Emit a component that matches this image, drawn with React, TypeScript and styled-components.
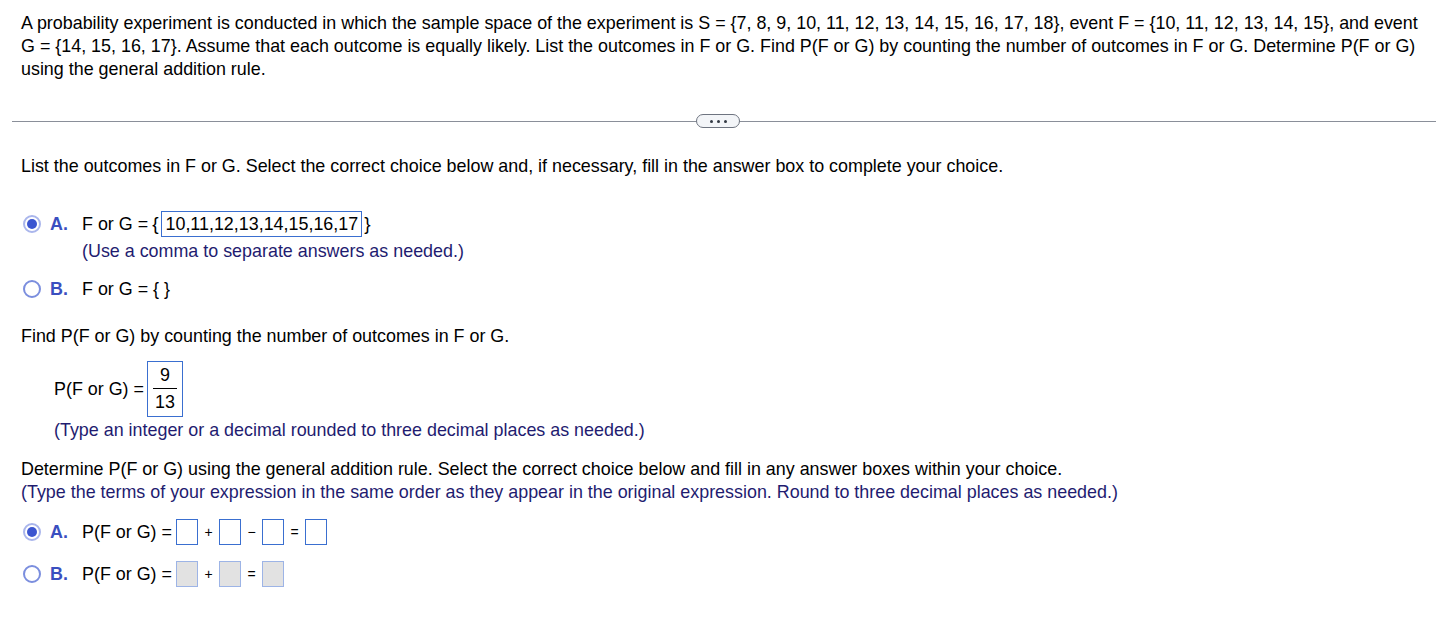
import styled, { createGlobalStyle } from "styled-components"
import type { ReactNode } from "react"

const GlobalStyle = createGlobalStyle`
    html, body {
        margin: 0;
        padding: 0;
        background: #ffffff;
    }
    body {
        font-family: "Liberation Sans", Arial, sans-serif;
        font-size: 17.9px;
        color: #000000;
    }
`

const QUESTION =
    "A probability experiment is conducted in which the sample space of the experiment is " +
    "S = {7, 8, 9, 10, 11, 12, 13, 14, 15, 16, 17, 18}, event F = {10, 11, 12, 13, 14, 15}, " +
    "and event G = {14, 15, 16, 17}. Assume that each outcome is equally likely. List the " +
    "outcomes in F or G. Find P(F or G) by counting the number of outcomes in F or G. " +
    "Determine P(F or G) using the general addition rule."

function Radio({ checked }: { checked?: boolean }) {
    return (
        <RadioSlot>
            <RadioCircle $checked={checked} />
        </RadioSlot>
    )
}

function Choice({
    letter,
    checked,
    children,
}: {
    letter: string
    checked?: boolean
    children: ReactNode
}) {
    return (
        <ChoiceRow>
            <Radio checked={checked} />
            <Letter>{letter}.</Letter>
            <ChoiceBody>{children}</ChoiceBody>
        </ChoiceRow>
    )
}

export default function App() {
    return (
        <Page>
            <GlobalStyle />
            <Question>{QUESTION}</Question>

            <Divider>
                <MoreButton>
                    <Dot />
                    <Dot />
                    <Dot />
                </MoreButton>
            </Divider>

            <Section $top={27}>
                <Prompt>
                    List the outcomes in F or G. Select the correct choice below and, if
                    necessary, fill in the answer box to complete your choice.
                </Prompt>

                <Choices $top={33}>
                    <Choice letter="A" checked>
                        <Line>
                            <span>F or G =</span>
                            <Brace>{"{"}</Brace>
                            <AnswerBox>10,11,12,13,14,15,16,17</AnswerBox>
                            <Brace>{"}"}</Brace>
                        </Line>
                        <Hint $top={3}>(Use a comma to separate answers as needed.)</Hint>
                    </Choice>
                    <Choice letter="B">
                        <Line>{"F or G = { }"}</Line>
                    </Choice>
                </Choices>
            </Section>

            <Section $top={23}>
                <Prompt>Find P(F or G) by counting the number of outcomes in F or G.</Prompt>
                <Indented>
                    <Line>
                        <span>P(F or G) =</span>
                        <FractionBox>
                            <Numerator>9</Numerator>
                            <Denominator>13</Denominator>
                        </FractionBox>
                    </Line>
                    <Hint $top={2}>
                        (Type an integer or a decimal rounded to three decimal places as needed.)
                    </Hint>
                </Indented>
            </Section>

            <Section $top={16}>
                <Prompt>
                    Determine P(F or G) using the general addition rule. Select the correct
                    choice below and fill in any answer boxes within your choice.
                </Prompt>
                <Hint>
                    (Type the terms of your expression in the same order as they appear in the
                    original expression. Round to three decimal places as needed.)
                </Hint>
                <Choices $top={15} $gap={16}>
                    <Choice letter="A" checked>
                        <Line>
                            <span>P(F or G) =</span>
                            <EmptyBox />
                            <Op>+</Op>
                            <EmptyBox />
                            <Op>−</Op>
                            <EmptyBox />
                            <Op>=</Op>
                            <EmptyBox />
                        </Line>
                    </Choice>
                    <Choice letter="B">
                        <Line>
                            <span>P(F or G) =</span>
                            <EmptyBox $disabled />
                            <Op>+</Op>
                            <EmptyBox $disabled />
                            <Op>=</Op>
                            <EmptyBox $disabled />
                        </Line>
                    </Choice>
                </Choices>
            </Section>
        </Page>
    )
}

const Page = styled.div`
    width: 1436px;
    padding-top: 12px;
`

const Question = styled.p`
    margin: 0;
    padding: 0 14px 0 21px;
    line-height: 23px;
`

const Divider = styled.div`
    margin: 33px 0 0 12px;
    height: 14px;
    display: flex;
    align-items: center;
    justify-content: center;
    position: relative;

    &::before {
        content: "";
        position: absolute;
        left: 0;
        right: 0;
        top: 7px;
        border-top: 1px solid #8a8f99;
    }
`

const MoreButton = styled.div`
    position: relative;
    width: 42px;
    height: 12px;
    margin-left: -12px;
    border: 1px solid #6e7480;
    border-radius: 7px;
    background: #f3f5f8;
    display: flex;
    align-items: center;
    justify-content: center;
    gap: 4px;
`

const Dot = styled.span`
    width: 3px;
    height: 3px;
    border-radius: 50%;
    background: #333a44;
`

const Section = styled.div<{ $top: number }>`
    padding-left: 21px;
    margin-top: ${({ $top }) => $top}px;
`

const Prompt = styled.div`
    line-height: 23px;
`

const Hint = styled.div<{ $top?: number }>`
    color: #1f1c70;
    line-height: 23px;
    margin-top: ${({ $top }) => $top ?? 0}px;
`

const Choices = styled.div<{ $top: number; $gap?: number }>`
    display: flex;
    flex-direction: column;
    gap: ${({ $gap }) => $gap ?? 13}px;
    margin-top: ${({ $top }) => $top}px;
`

const ChoiceRow = styled.div`
    display: flex;
    align-items: flex-start;
`

const RadioSlot = styled.span`
    width: 22px;
    height: 26px;
    display: flex;
    align-items: center;
    justify-content: center;
    flex-shrink: 0;
`

const RadioCircle = styled.span<{ $checked?: boolean }>`
    width: 18px;
    height: 18px;
    box-sizing: border-box;
    border-radius: 50%;
    border: 2px solid ${({ $checked }) => ($checked ? "#aab6ec" : "#7b8ede")};
    background: #ffffff;
    display: flex;
    align-items: center;
    justify-content: center;

    &::after {
        content: "";
        width: 10px;
        height: 10px;
        border-radius: 50%;
        background: ${({ $checked }) => ($checked ? "#3b55d0" : "transparent")};
    }
`

const Letter = styled.span`
    width: 32px;
    margin-left: 7px;
    line-height: 26px;
    font-weight: 700;
    color: #3a4fc0;
`

const ChoiceBody = styled.div`
    display: flex;
    flex-direction: column;
`

const Line = styled.div`
    display: flex;
    align-items: center;
    gap: 4px;
    min-height: 26px;
    white-space: pre;
`

const Brace = styled.span`
    font-size: 19px;
`

const AnswerBox = styled.span`
    border: 1px solid #3a6fd0;
    padding: 0 3px;
    height: 26px;
    line-height: 25px;
    box-sizing: border-box;
    margin: 0 -2px 0 -1px;
`

const Indented = styled.div`
    margin-top: 13px;
    padding-left: 33px;
`

const FractionBox = styled.span`
    display: inline-flex;
    flex-direction: column;
    align-items: center;
    width: 36px;
    height: 56px;
    box-sizing: border-box;
    border: 1px solid #3a6fd0;
    margin-left: -1px;
    padding: 1px 0;
`

const Numerator = styled.span`
    line-height: 25px;
    width: 24px;
    text-align: center;
    border-bottom: 1px solid #000000;
`

const Denominator = styled.span`
    line-height: 27px;
`

const EmptyBox = styled.span<{ $disabled?: boolean }>`
    display: inline-block;
    width: 22px;
    height: 26px;
    box-sizing: border-box;
    border: 1px solid ${({ $disabled }) => ($disabled ? "#9db4e6" : "#3a6fd0")};
    background: ${({ $disabled }) => ($disabled ? "#e2e2e2" : "#ffffff")};
`

const Op = styled.span`
    font-size: 14px;
    width: 13px;
    text-align: center;
`
